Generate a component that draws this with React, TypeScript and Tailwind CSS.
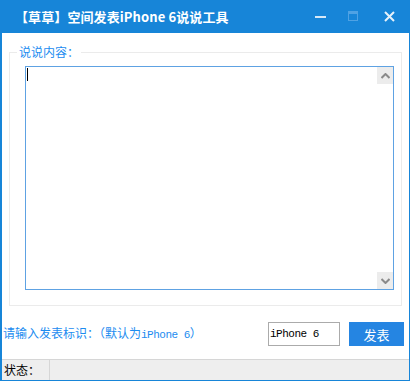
const CJK = '"Noto Sans CJK SC", "Liberation Sans", sans-serif'
const MONO = '"Liberation Mono", "Noto Sans CJK SC", monospace'

function TitleBar() {
  return (
    <div className="flex h-[33px] items-center bg-[#1785d8] pl-[15px] text-white">
      <span
        className="text-[13px] font-bold leading-none tracking-[0.1px]"
        style={{ fontFamily: CJK }}
      >
        【草草】空间发表iPhone 6说说工具
      </span>
      <div className="ml-auto flex items-center">
        {/* minimize */}
        <svg width="12" height="12" viewBox="0 0 12 12" className="mr-[21px]">
          <rect x="0" y="5" width="11" height="2" fill="#d6e8f7" />
        </svg>
        {/* maximize (disabled) */}
        <svg width="11" height="11" viewBox="0 0 11 11" className="mr-[25px]">
          <rect x="0.5" y="0.5" width="9" height="9" fill="none" stroke="#4fa2e4" />
          <rect x="1" y="1" width="8" height="2" fill="#4fa2e4" />
        </svg>
        {/* close */}
        <svg width="11" height="11" viewBox="0 0 11 11" className="mr-[15px]">
          <path d="M1 1 L10 10 M10 1 L1 10" stroke="#e6f1fa" strokeWidth="2" />
        </svg>
      </div>
    </div>
  )
}

function ScrollArrow({ up }: { up: boolean }) {
  return (
    <div className="flex h-[17px] w-[16px] items-center justify-center bg-[#ececec]">
      <svg width="9" height="6" viewBox="0 0 9 6">
        <path
          d={up ? 'M0.5 5 L4.5 1 L8.5 5' : 'M0.5 1 L4.5 5 L8.5 1'}
          fill="none"
          stroke="#8a8a8a"
          strokeWidth="2"
        />
      </svg>
    </div>
  )
}

export default function App() {
  return (
    <div className="flex h-[381px] w-[410px] flex-col bg-white" style={{ fontFamily: CJK }}>
      <TitleBar />

      <div className="flex flex-1 flex-col border-b border-l-2 border-r border-[#1785d8]">
        {/* 说说内容 分组框 */}
        <fieldset className="mx-[7px] mt-[11px] border border-[#ebebeb] pb-[15px]">
          <legend className="ml-[7px] px-[2px] text-[12px] leading-[16px] text-[#1c8cf0]">
            说说内容：
          </legend>
          <div className="ml-[15px] mr-[7px] mt-[6px] flex h-[224px] border border-[#5ea2e3]">
            <div className="flex-1 pl-[1px] pt-[1px]">
              <div className="h-[13px] w-[1px] bg-black" />
            </div>
            <div className="flex flex-col justify-between">
              <ScrollArrow up />
              <ScrollArrow up={false} />
            </div>
          </div>
        </fieldset>

        {/* 发表标识 */}
        <div className="mt-[16px] flex h-[24px] items-center pl-[1px]">
          <span className="text-[12px] leading-none text-[#1c8cf0]">
            请输入发表标识：（默认为
            <span className="text-[11px] tracking-[-0.5px]" style={{ fontFamily: MONO }}>
              iPhone 6
            </span>
            ）
          </span>
          <div className="ml-auto flex h-[24px] w-[72px] items-center border border-[#ababab] pl-[1px]">
            <span
              className="text-[11px] leading-none tracking-[-0.5px] text-black"
              style={{ fontFamily: MONO }}
            >
              iPhone 6
            </span>
          </div>
          <button className="ml-[9px] mr-[5px] flex h-[24px] w-[55px] items-center justify-center bg-[#2585e2] text-[13px] leading-none text-white">
            发表
          </button>
        </div>

        {/* 状态栏 */}
        <div className="mt-auto flex h-[21px] border-t border-[#d6d6d6] bg-[#eeeeee]">
          <div className="flex w-[48px] items-center border-r border-[#d6d6d6] pl-[2px] text-[12px] leading-none text-black">
            状态：
          </div>
        </div>
      </div>
    </div>
  )
}
